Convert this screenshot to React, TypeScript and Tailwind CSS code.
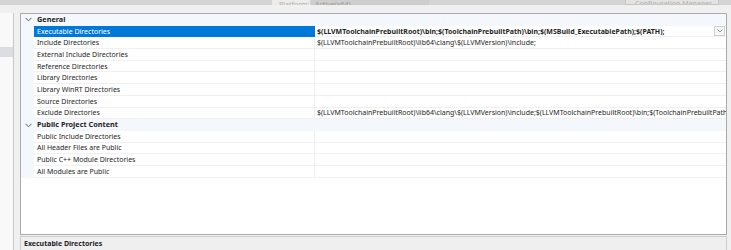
import React from "react";

const rowsGeneral: { name: string; value?: string; bold?: boolean; selected?: boolean }[] = [
  { name: "Executable Directories", value: "$(LLVMToolchainPrebuiltRoot)\\bin;$(ToolchainPrebuiltPath)\\bin;$(MSBuild_ExecutablePath);$(PATH);", bold: true, selected: true },
  { name: "Include Directories", value: "$(LLVMToolchainPrebuiltRoot)\\lib64\\clang\\$(LLVMVersion)\\include;" },
  { name: "External Include Directories" },
  { name: "Reference Directories" },
  { name: "Library Directories" },
  { name: "Library WinRT Directories" },
  { name: "Source Directories" },
  { name: "Exclude Directories", value: "$(LLVMToolchainPrebuiltRoot)\\lib64\\clang\\$(LLVMVersion)\\include;$(LLVMToolchainPrebuiltRoot)\\bin;$(ToolchainPrebuiltPath)\\bin;" },
];
const rowsPublic = [
  { name: "Public Include Directories" },
  { name: "All Header Files are Public" },
  { name: "Public C++ Module Directories" },
  { name: "All Modules are Public" },
];

function Chevron() {
  return (
    <svg width="7" height="5" viewBox="0 0 7 5" className="block">
      <path d="M0.5 0.8 L3.5 3.8 L6.5 0.8" fill="none" stroke="#5a5a5a" strokeWidth="1" />
    </svg>
  );
}

function Header({ title }: { title: string }) {
  return (
    <div className="flex h-[11.7px] items-center bg-[#f4f7fb]">
      <div className="flex w-[13px] shrink-0 justify-center pl-[1px]">
        <Chevron />
      </div>
      <div className="pl-[3px] text-[7.3px] font-bold text-[#1e1e1e]">{title}</div>
    </div>
  );
}

function Row({ name, value, bold, selected }: { name: string; value?: string; bold?: boolean; selected?: boolean }) {
  return (
    <div className="flex h-[11.7px] items-stretch">
      <div className="w-[13px] shrink-0 bg-[#f4f7fb]" />
      <div
        className={
          selected
            ? "flex w-[281px] shrink-0 items-center bg-[#0078d7] pl-[3px] text-white"
            : "flex w-[281px] shrink-0 items-center border-b border-r border-[#f0f0f0] pl-[3px] text-[#1e1e1e]"
        }
      >
        {name}
      </div>
      <div
        className={
          "relative flex min-w-0 flex-1 items-center overflow-hidden whitespace-nowrap border-b border-[#f0f0f0] pl-[2px] text-[#1e1e1e] " +
          (bold ? "font-bold" : "")
        }
      >
        {value}
        {selected && (
          <div className="absolute right-[1px] top-[0.5px] flex h-[10px] w-[11px] items-center justify-center border border-[#cfcfcf] bg-[#f7f7f7]">
            <svg width="6" height="4" viewBox="0 0 6 4">
              <path d="M0.5 0.5 L3 3 L5.5 0.5" fill="none" stroke="#8a8a8a" strokeWidth="0.9" />
            </svg>
          </div>
        )}
      </div>
    </div>
  );
}

export default function App() {
  return (
    <div className="relative flex h-[250px] w-[731px] flex-col overflow-hidden bg-[#f0f0f0] font-['Noto_Sans','Open_Sans',sans-serif] text-[7px] leading-none">
      {/* top band with tabs */}
      <div className="relative flex h-[5px] shrink-0 items-end bg-[#d4d4d4]">
        <div className="ml-[272px] flex h-[5px] w-[38px] items-end overflow-hidden bg-[#ececec]">
          <div className="mb-[-3px] pl-[7px] text-[#b0b0b0]">Platform:</div>
        </div>
        <div className="ml-[1px] flex h-[5px] w-[118px] items-end overflow-hidden bg-[#cdcdcd]">
          <div className="mb-[-3px] pl-[4px] text-[#9a9a9a]">Active(x64)</div>
        </div>
        <div className="ml-auto mr-[12px] flex h-[5px] w-[94px] items-end overflow-hidden border-x border-b border-[#c6c6c6] bg-[#e3e3e3]">
          <div className="mb-[-3px] pl-[9px] text-[#b0b0b0]">Configuration Manager...</div>
        </div>
      </div>
      <div className="h-[8px] shrink-0" />
      <div className="flex min-h-0 flex-1">
        {/* left tree panel */}
        <div className="w-[14px] shrink-0 border-r border-[#c8c8c8] bg-[#f9f9f9]">
          <div className="mt-[34px] h-[10px] bg-[#dadde2]" />
        </div>
        <div className="ml-[6px] mr-[4px] flex min-w-0 flex-1 flex-col">
          {/* grid */}
          <div className="h-[222px] shrink-0 overflow-hidden border border-[#ababab] bg-white">
            <Header title="General" />
            {rowsGeneral.map((r) => (
              <Row key={r.name} {...r} />
            ))}
            <Header title="Public Project Content" />
            {rowsPublic.map((r) => (
              <Row key={r.name} {...r} />
            ))}
          </div>
          <div className="mt-[1px] flex-1 border-l border-t border-r border-[#cdcdcd] bg-[#efefef] pl-[3px] pt-[3px]">
            <div className="font-bold text-[#1e1e1e]">Executable Directories</div>
          </div>
        </div>
      </div>
    </div>
  );
}
